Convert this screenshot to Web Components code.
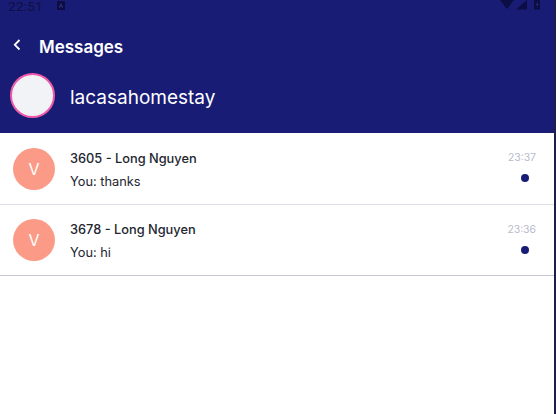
<!DOCTYPE html>
<html><head><meta charset="utf-8"><style>
html,body{margin:0;padding:0;height:100%;background:#fff;overflow:hidden}
body{font-family:Inter,"Liberation Sans",sans-serif}
</style></head><body>
<template id="t-app"><style>
:host{display:flex;width:556px;height:414px;overflow:hidden;background:#fff}
.main{flex:1;min-width:0;display:flex;flex-direction:column}
.edge{width:2px;background:#1e1e46}
</style><div class="main"><slot></slot></div><div class="edge"></div></template>

<template id="t-status"><style>
:host{display:flex;align-items:flex-start;justify-content:space-between;height:12px;padding:0 14px 0 8px;color:#0f0f47;background:#191c74;font:13.5px/12px Roboto,sans-serif;letter-spacing:.3px}
.l{display:flex;gap:14px}
svg{display:block}
</style><div class="l"><span>22:51</span><svg width="8" height="9" viewBox="0 0 8 9" style="margin-top:1px"><path d="M0 0h8v9H0z" fill="#0d0d45"/><path d="M4 1.500 6.200 7H5.200L4.800 6H3.200L2.800 7H1.800z" fill="#2b2b72"/></svg></div>
<svg width="40" height="10" viewBox="0 0 40 10"><path d="M0 0H14L7 9Z" fill="#0d0d45"/><path d="M16 9.500 27 0V9.500Z" fill="#0d0d45"/><path d="M34 0H40V9.500H34Z" fill="#0d0d45"/><path d="M37.500 1 36 5H37.200L36.700 8 38.500 4H37.300Z" fill="#2b2b72"/></svg></template>

<template id="t-header"><style>
:host{display:block;background:#191c74;color:#fff;height:121px}
.top{display:flex;align-items:center;gap:18px;padding:23px 0 0 13px;height:24px}
svg{display:block;margin-top:-4px}
h1{margin:0;font:600 17px/24px Inter,sans-serif}
.acct{display:flex;align-items:center;gap:15px;padding:14px 0 0 10px}
.av{width:41px;height:41px;border-radius:50%;background:#f2f3f7;border:2px solid #ee5aa8}
.name{font:400 19px/24px Inter,sans-serif;padding-top:4px}
</style><div class="top"><svg width="8" height="12" viewBox="0 0 8 12"><path d="M6.500 1 1.800 5.800 6.500 10.500" fill="none" stroke="#fff" stroke-width="1.800"/></svg><h1><slot name="title"></slot></h1></div>
<div class="acct"><div class="av"></div><div class="name"><slot name="name"></slot></div></div></template>

<template id="t-row"><style>
:host{display:flex;height:72px;box-sizing:border-box;border-bottom:1px solid #e1e0e8;padding:0 0 0 13px;align-items:center;color:#23262f}
:host([last]){height:71px;border-bottom-color:#c8c6d2}
.av{width:42px;height:42px;border-radius:50%;background:#fb9a87;color:#fff;display:flex;align-items:center;justify-content:center;font:400 16px/1 Inter,sans-serif;flex:none}
.txt{flex:1;margin-left:15px;display:flex;flex-direction:column;gap:7px;padding-top:4px}
:host([last]) .txt{padding-top:3px}
.t{font:500 12.8px/16px Inter,sans-serif}
.s{font:400 12.8px/16px Inter,sans-serif}
.meta{width:46px;height:50px;display:flex;flex-direction:column;margin-right:16px;padding-top:7px;box-sizing:border-box}
:host([last]) .meta{padding-top:8px}
.time{font:400 10.4px/14px Inter,sans-serif;color:#b8bacd;align-self:flex-end;margin-right:2px}
.dot{width:8px;height:8px;border-radius:50%;background:#191c74;margin:9px 9px 0 auto}
</style><div class="av">V</div><div class="txt"><div class="t"><slot name="title"></slot></div><div class="s"><slot name="sub"></slot></div></div><div class="meta"><div class="time"><slot name="time"></slot></div><div class="dot"></div></div></template>

<x-app>
<x-status></x-status>
<x-header><span slot="title">Messages</span><span slot="name">lacasahomestay</span></x-header>
<x-row><span slot="title">3605 - Long Nguyen</span><span slot="sub">You: thanks</span><span slot="time">23:37</span></x-row>
<x-row last><span slot="title">3678 - Long Nguyen</span><span slot="sub">You: hi</span><span slot="time">23:36</span></x-row>
</x-app>
<script>
for(const [n,t] of [['x-app','t-app'],['x-status','t-status'],['x-header','t-header'],['x-row','t-row']]){
customElements.define(n,class extends HTMLElement{constructor(){super();this.attachShadow({mode:'open'}).appendChild(document.getElementById(t).content.cloneNode(true));}});
}
</script>
</body></html>
